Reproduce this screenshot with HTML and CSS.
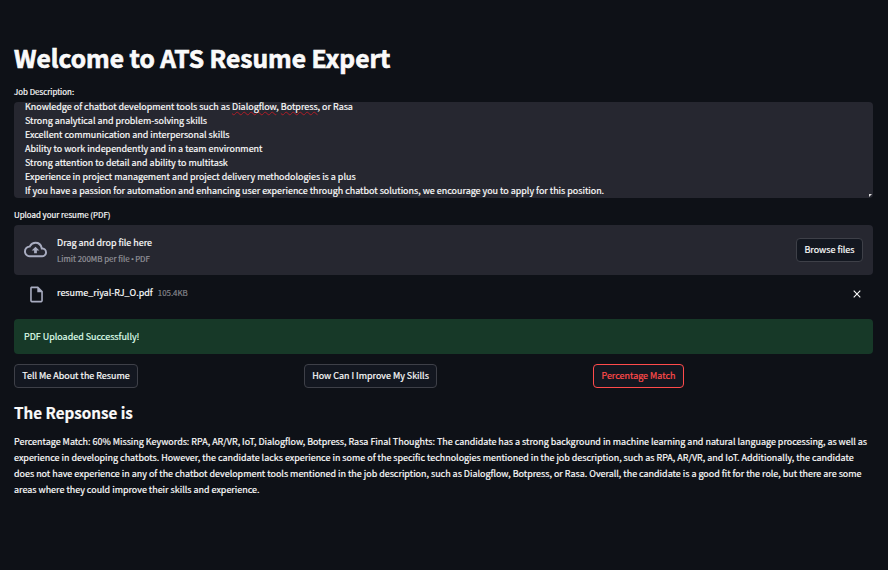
FILE: index.html
```html
<!DOCTYPE html>
<html lang="en">
<head>
<meta charset="utf-8">
<title>ATS Resume Expert</title>
<link rel="stylesheet" href="styles.css">
</head>
<body>
<main class="page">
  <h1 class="title">Welcome to ATS Resume Expert</h1>
  <div class="label job-label">Job Description:</div>
  <div class="textarea">
    <div>Knowledge of chatbot development tools such as <span class="misspelled">Dialogflow</span>, <span class="misspelled">Botpress</span>, or Rasa</div>
    <div>Strong analytical and problem-solving skills</div>
    <div>Excellent communication and interpersonal skills</div>
    <div>Ability to work independently and in a team environment</div>
    <div>Strong attention to detail and ability to multitask</div>
    <div>Experience in project management and project delivery methodologies is a plus</div>
    <div>If you have a passion for automation and enhancing user experience through chatbot solutions, we encourage you to apply for this position.</div>
    <i class="grip"></i>
  </div>
  <div class="label upload-label">Upload your resume (PDF)</div>
  <section class="dropzone">
    <svg class="cloud" viewBox="0 0 24 24"><path d="M19.35 10.04A7.49 7.49 0 0 0 12 4C9.11 4 6.6 5.64 5.35 8.04A5.994 5.994 0 0 0 0 14c0 3.31 2.69 6 6 6h13c2.76 0 5-2.24 5-5 0-2.64-2.05-4.78-4.65-4.96zM19 18H6c-2.21 0-4-1.79-4-4 0-2.05 1.53-3.76 3.56-3.97l1.07-.11.5-.95A5.469 5.469 0 0 1 12 6c2.62 0 4.88 1.86 5.39 4.43l.3 1.5 1.53.11A2.98 2.98 0 0 1 22 15c0 1.65-1.35 3-3 3zM8 13h2.55v3h2.9v-3H16l-4-4z"/></svg>
    <div class="drop-text">
      <div class="drop-main">Drag and drop file here</div>
      <div class="drop-limit">Limit 200MB per file <span class="dot">•</span> PDF</div>
    </div>
    <button class="button browse">Browse files</button>
  </section>
  <div class="file">
    <svg class="doc" viewBox="0 0 24 24"><path d="M14 2H6c-1.1 0-1.99.9-1.99 2L4 20c0 1.1.89 2 1.99 2H18c1.1 0 2-.9 2-2V8l-6-6zM6 20V4h7v5h5v11H6z"/></svg>
    <span class="file-name">resume_riyal-RJ_O.pdf</span>
    <span class="file-size">105.4KB</span>
    <svg class="close" viewBox="0 0 8 8"><path d="M.7.7l6.6 6.6M7.3.7L.7 7.3"/></svg>
  </div>
  <div class="alert"><span>PDF Uploaded Successfully!</span></div>
  <div class="actions">
    <div><button class="button tell">Tell Me About the Resume</button></div>
    <div><button class="button improve">How Can I Improve My Skills</button></div>
    <div><button class="button match">Percentage Match</button></div>
  </div>
  <h2 class="subtitle">The Repsonse is</h2>
  <p class="response">Percentage Match: 60% Missing Keywords: RPA, AR/VR, IoT, Dialogflow, Botpress, Rasa Final Thoughts: The candidate has a strong background in machine learning and natural language processing, as well as<br>experience in developing chatbots. However, the candidate lacks experience in some of the specific technologies mentioned in the job description, such as RPA, AR/VR, and IoT. Additionally, the candidate<br>does not have experience in any of the chatbot development tools mentioned in the job description, such as Dialogflow, Botpress, or Rasa. Overall, the candidate is a good fit for the role, but there are some<br>areas where they could improve their skills and experience.</p>
</main>
</body>
</html>
```
FILE: styles.css
```css
* { box-sizing: border-box; }
body {
  margin: 0;
  background: #0e1117;
  color: #fafafa;
  font: 8.963px/16px "Noto Sans CJK SC", "Open Sans", sans-serif;
  -webkit-text-stroke: 0.2px;
  white-space: nowrap;
}
.page { height: 570px; padding: 42px 15px 0 14px; }
.title { margin: 0; font-size: 24.55px; line-height: 32px; font-weight: 700; -webkit-text-stroke: 0.7px; }
.label { font-size: 7.9px; line-height: 12px; }
.job-label { margin: 12px 0 4px; }
.textarea {
  position: relative;
  height: 96px;
  padding-left: 11px;
  border-radius: 4px;
  background: #262730;
  line-height: 14px;
}
.textarea div:first-of-type { height: 12px; line-height: 10px; }
.misspelled { text-decoration: underline wavy #b01c26 1px; text-underline-offset: 1px; text-decoration-skip-ink: none; }
.grip {
  position: absolute;
  right: 1px;
  bottom: 1px;
  border-top: 3px solid #ddd;
  border-right: 3px solid transparent;
}
.upload-label { margin: 11px 0 4px; }
.dropzone {
  display: flex;
  align-items: center;
  height: 50px;
  padding: 0 10px;
  border-radius: 4px;
  background: #262730;
}
.cloud { width: 23px; height: 23px; margin-bottom: 1px; fill: #a9adc1; }
.drop-text { margin-left: 10px; padding-top: 2px; flex: 1; }
.drop-limit { font-size: 7.9px; color: #94949b; }
.dot { font-family: "Open Sans", sans-serif; margin: 0 -0.5px; }
.button {
  display: flex;
  align-items: center;
  justify-content: center;
  height: 24px;
  padding: 0;
  border: 1px solid #3e4048;
  border-radius: 4px;
  background: #131720;
  color: #fafafa;
  font: inherit;
  -webkit-text-stroke: 0.2px;
}
.browse { width: 67px; }
.file { display: flex; align-items: center; height: 37px; padding: 0 12px 0 12.5px; }
.doc { width: 19px; height: 19px; margin-top: 1px; fill: #a9adc1; }
.file-name { margin: 0 0 2px 11.5px; }
.file-size { margin: 0 0 1px 5px; font-size: 7.9px; color: #83848a; }
.close { width: 8px; height: 8px; margin-left: auto; fill: none; stroke: #fafafa; stroke-width: 1.1; }
.alert {
  display: flex;
  align-items: center;
  height: 35px;
  margin-top: 7px;
  padding-left: 10px;
  border-radius: 4px;
  background: #173928;
  color: #dffde9;
}
.actions { display: grid; grid-template-columns: 290px 289px 1fr; margin-top: 10px; }
.tell { width: 124px; }
.improve { width: 133px; }
.match { width: 91px; border-color: #ff4b4b; color: #ff4b4b; }
.subtitle { margin: 12px 0 0; font-size: 15.2px; line-height: 24px; font-weight: 700; }
.response { margin: 10px 0 0; }
```
